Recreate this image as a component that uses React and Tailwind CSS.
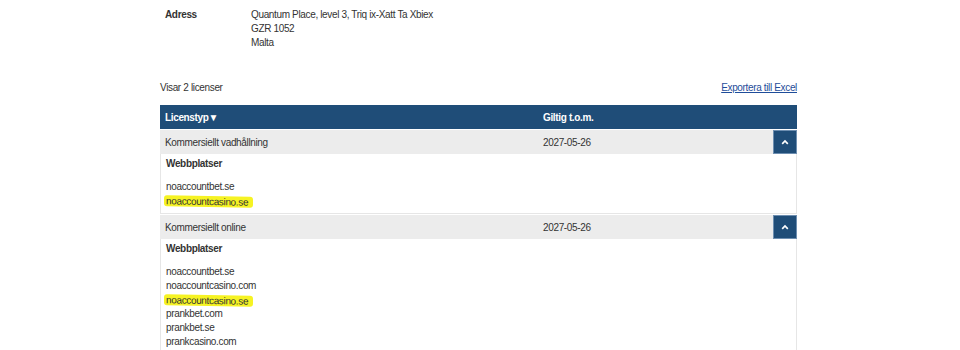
import React from "react";

const Chevron = () => (
  <svg width="8" height="6" viewBox="0 0 8 6" className="block">
    <polyline points="1.2,4.8 4,2 6.8,4.8" fill="none" stroke="white" strokeWidth="1.7" />
  </svg>
);

const Hl = ({ children }) => (
  <span className="inline-block bg-[#f6f323] rounded-[3px] pl-[2px] pr-[5px] -ml-[2px] leading-[11px] skew-y-[1deg]">
    {children}
  </span>
);

const Row = ({ type, date }) => (
  <div className="flex h-[24px] bg-[#ececec] items-stretch mt-[1px]">
    <div className="w-[378px] pl-[5px] flex items-center">{type}</div>
    <div className="flex-1 pl-[5px] flex items-center">{date}</div>
    <div className="w-[24px] bg-[#1f4d78] flex items-center justify-center border border-[#6d8eb0]">
      <Chevron />
    </div>
  </div>
);

const Panel = ({ sites }) => (
  <div className="border-x border-b border-[#e6e6e6] px-[5px] pt-[3px] pb-[5px]">
    <div className="font-bold leading-[14px]">Webbplatser</div>
    <div className="mt-[9px] leading-[14px]">
      {sites.map((s, i) => (
        <div key={i} className="h-[14px] flex items-center">{s}</div>
      ))}
    </div>
  </div>
);

export default function App() {
  return (
    <div
      className="w-[960px] h-[350px] bg-white text-[#333] text-[10px] tracking-[-0.35px] overflow-hidden"
      style={{ fontFamily: '"Liberation Sans", Arial, sans-serif' }}
    >
      <div className="ml-[160px] w-[637px]">
        <div className="flex pt-[8px] leading-[14px]">
          <div className="w-[91px] pl-[5px] font-bold">Adress</div>
          <div>
            <div>Quantum Place, level 3, Triq ix-Xatt Ta Xbiex</div>
            <div>GZR 1052</div>
            <div>Malta</div>
          </div>
        </div>
        <div className="flex justify-between items-center mt-[31px] leading-[14px]">
          <div>Visar 2 licenser</div>
          <a className="text-[#1f4d9a] underline">Exportera till Excel</a>
        </div>
        <div className="mt-[10px] flex h-[24px] bg-[#1f4d78] text-white font-bold items-center">
          <div className="w-[378px] pl-[5px]">Licenstyp▼</div>
          <div className="pl-[5px]">Giltig t.o.m.</div>
        </div>
        <Row type="Kommersiellt vadhållning" date="2027-05-26" />
        <Panel sites={["noaccountbet.se", <Hl>noaccountcasino.se</Hl>]} />
        <Row type="Kommersiellt online" date="2027-05-26" />
        <Panel
          sites={[
            "noaccountbet.se",
            "noaccountcasino.com",
            <Hl>noaccountcasino.se</Hl>,
            "prankbet.com",
            "prankbet.se",
            "prankcasino.com",
          ]}
        />
      </div>
    </div>
  );
}
